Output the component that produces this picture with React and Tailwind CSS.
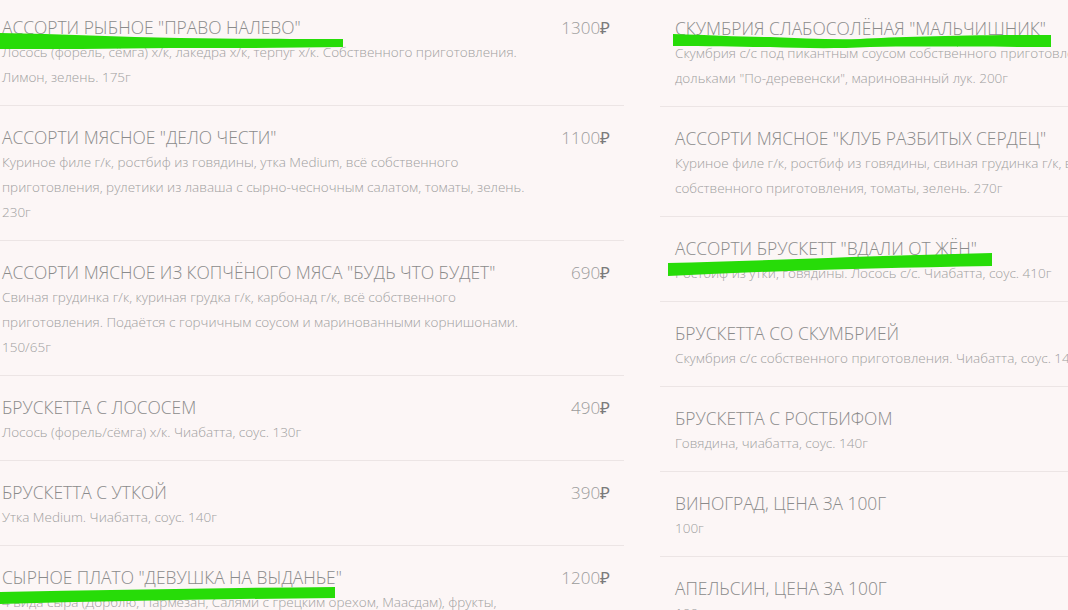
import React from "react";

const leftItems = [
  {
    title: 'АССОРТИ РЫБНОЕ "ПРАВО НАЛЕВО"',
    price: "1300",
    lines: ["Лосось (форель, сёмга) х/к, лакедра х/к, терпуг х/к. Собственного приготовления.", "Лимон, зелень. 175г"],
  },
  {
    title: 'АССОРТИ МЯСНОЕ "ДЕЛО ЧЕСТИ"',
    price: "1100",
    lines: [
      "Куриное филе г/к, ростбиф из говядины, утка Medium, всё собственного",
      "приготовления, рулетики из лаваша с сырно-чесночным салатом, томаты, зелень.",
      "230г",
    ],
  },
  {
    title: 'АССОРТИ МЯСНОЕ ИЗ КОПЧЁНОГО МЯСА "БУДЬ ЧТО БУДЕТ"',
    price: "690",
    lines: [
      "Свиная грудинка г/к, куриная грудка г/к, карбонад г/к, всё собственного",
      "приготовления. Подаётся с горчичным соусом и маринованными корнишонами.",
      "150/65г",
    ],
  },
  { title: "БРУСКЕТТА С ЛОСОСЕМ", price: "490", lines: ["Лосось (форель/сёмга) х/к. Чиабатта, соус. 130г"] },
  { title: "БРУСКЕТТА С УТКОЙ", price: "390", lines: ["Утка Medium. Чиабатта, соус. 140г"] },
  {
    title: 'СЫРНОЕ ПЛАТО "ДЕВУШКА НА ВЫДАНЬЕ"',
    price: "1200",
    lines: ["4 вида сыра (Дорблю, Пармезан, Салями с грецким орехом, Маасдам), фрукты,"],
  },
];

const rightItems = [
  {
    title: 'СКУМБРИЯ СЛАБОСОЛЁНАЯ "МАЛЬЧИШНИК"',
    lines: ["Скумбрия с/с под пикантным соусом собственного приготовления, картофель", 'дольками "По-деревенски", маринованный лук. 200г'],
  },
  {
    title: 'АССОРТИ МЯСНОЕ "КЛУБ РАЗБИТЫХ СЕРДЕЦ"',
    lines: ["Куриное филе г/к, ростбиф из говядины, свиная грудинка г/к, всё", "собственного приготовления, томаты, зелень. 270г"],
  },
  { title: 'АССОРТИ БРУСКЕТТ "ВДАЛИ ОТ ЖЁН"', lines: ["Ростбиф из утки, говядины. Лосось с/с. Чиабатта, соус. 410г"] },
  { title: "БРУСКЕТТА СО СКУМБРИЕЙ", lines: ["Скумбрия с/с собственного приготовления. Чиабатта, соус. 140г"] },
  { title: "БРУСКЕТТА С РОСТБИФОМ", lines: ["Говядина, чиабатта, соус. 140г"] },
  { title: "ВИНОГРАД, ЦЕНА ЗА 100Г", lines: ["100г"] },
  { title: "АПЕЛЬСИН, ЦЕНА ЗА 100Г", lines: ["100г"] },
];

const MenuItem = ({ item, className }) => (
  <div className={`flex justify-between border-b border-[#ece5e5] pt-[19px] pb-[15px] ${className}`}>
    <div className="flex flex-col">
      <div className="text-[17.4px] leading-[25px] font-light text-[#8b8b8b] whitespace-nowrap">{item.title}</div>
      {item.lines.map((line, i) => (
        <div key={i} className="text-[13.5px] leading-[25px] font-light text-[#a0a0a0] whitespace-nowrap">
          {line}
        </div>
      ))}
    </div>
    {item.price && (
      <div className="text-[17px] leading-[25px] font-light text-[#9b9b9b] whitespace-nowrap">
        {item.price}
        <span className="font-normal text-[#7a7a7a]">₽</span>
      </div>
    )}
  </div>
);

export default function App() {
  return (
    <div
      className="relative h-[610px] w-full overflow-hidden bg-[#fcf6f6]"
      style={{ fontFamily: '"Open Sans", "Noto Sans", sans-serif' }}
    >
      <div className="flex">
        <div className="mt-[-4px] w-[624px] shrink-0">
          {leftItems.map((item, i) => (
            <MenuItem key={i} item={item} className="pl-[2px] pr-[14px]" />
          ))}
        </div>
        <div className="ml-[36px] mt-[-3px] w-[637px] shrink-0">
          {rightItems.map((item, i) => (
            <MenuItem key={i} item={item} className="px-[15px]" />
          ))}
        </div>
      </div>

      {/* green marker strokes drawn over the menu */}
      <svg className="pointer-events-none absolute inset-0" width="1068" height="610" viewBox="0 0 1068 610">
        <g fill="#27dc08">
          <path d="M0 33 C60 34 120 37 180 38 C240 39 300 39 343 39 L343 47 C290 48 230 48 170 48 C110 49 50 49 0 49 Z" />
          <path d="M673 34 C710 35 740 37 770 37 C800 38 830 40 860 39 C900 37 960 35 1051 35 L1051 47 C980 47 920 46 870 47 C830 49 800 48 770 47 C740 47 710 46 673 46 Z" />
          <path d="M668 263 C760 261 860 256 992 253 L992 266 C870 268 770 271 668 276 Z" />
          <path d="M0 592 C110 590 220 588 335 587 L335 598 C220 599 110 601 0 604 Z" />
        </g>
      </svg>
    </div>
  );
}
